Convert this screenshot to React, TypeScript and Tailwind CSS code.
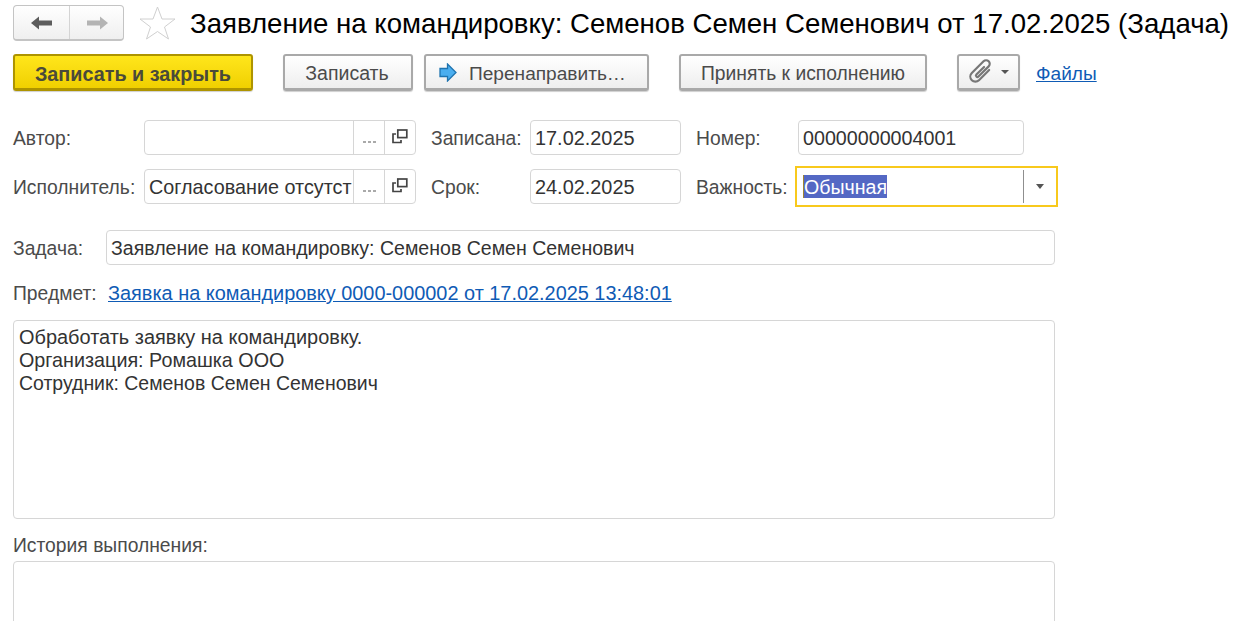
const font = { fontFamily: '"Liberation Sans", Arial, sans-serif' };

function Btn({ children, w, ml, cls }: { children: React.ReactNode; w: string; ml?: string; cls?: string }) {
  return (
    <button className={`${w} ${ml ?? ""} ${cls ?? "justify-center"} h-[37px] shrink-0 flex items-center rounded-[3px] border-2 border-[#a9a9a9] border-b-[3px] shadow-[0_1px_1px_#cfcfcf] bg-gradient-to-b from-white to-[#eeeeee] text-[#4b4b4b] text-[19.3px]`}>
      {children}
    </button>
  );
}

function OpenIcon() {
  return (
    <svg width="16" height="15" viewBox="0 0 16 15" fill="none" stroke="#444" strokeWidth="1.7">
      <rect x="5.8" y="1" width="9" height="7.6" fill="none" />
      <path d="M4 5H1v8.5h8V11" />
    </svg>
  );
}

function ChoiceField({ text, w }: { text: string; w: string }) {
  return (
    <div className={`${w} h-[35px] shrink-0 flex rounded-[4px] border border-[#d6d6d6] bg-white`}>
      <div className="flex-1 min-w-0 overflow-hidden whitespace-nowrap pl-[4px] leading-[34px] text-[19.8px] text-[#333]">{text}</div>
      <div className="w-[31px] border-l border-[#d6d6d6] flex items-center justify-center pt-[9px]">
        <div className="flex gap-[2px]">
          <span className="w-[3px] h-[2px] bg-[#aaa]" />
          <span className="w-[3px] h-[2px] bg-[#aaa]" />
          <span className="w-[3px] h-[2px] bg-[#aaa]" />
        </div>
      </div>
      <div className="w-[31px] border-l border-[#d6d6d6] flex items-center justify-center pb-[2px]">
        <OpenIcon />
      </div>
    </div>
  );
}

function TextField({ text, w, size }: { text: string; w: string; size: string }) {
  return (
    <div className={`${w} ${size} h-[35px] shrink-0 rounded-[4px] border border-[#d6d6d6] bg-white pl-[4px] leading-[34px] text-[#333] whitespace-nowrap overflow-hidden`}>
      {text}
    </div>
  );
}

export default function App() {
  return (
    <div style={font} className="w-[1247px] h-[621px] overflow-hidden bg-white text-[19.3px] text-[#4b4b4b] pl-[13px]">
      {/* Title row */}
      <div className="flex items-center pt-[5px] h-[41px]">
        <div className="w-[111px] h-[36px] flex rounded-[4px] border border-[#c4c4c4] border-b-2 bg-gradient-to-b from-white to-[#efefef]">
          <div className="w-[56px] flex items-center justify-center border-r border-[#d4d4d4]">
            <svg width="22" height="14" viewBox="0 0 22 14"><path d="M0 7 L8 0.5 V4.5 H21 V9.5 H8 V13.5 Z" fill="#5c5c5c" /></svg>
          </div>
          <div className="flex-1 flex items-center justify-center">
            <svg width="22" height="14" viewBox="0 0 22 14"><path d="M22 7 L14 0.5 V4.5 H1 V9.5 H14 V13.5 Z" fill="#b4b4b4" /></svg>
          </div>
        </div>
        <svg className="ml-[15px]" width="37" height="34" viewBox="0 0 37 34" fill="#fff" stroke="#d0d0d0" strokeWidth="1">
          <path d="M18.5 1 L23 13 H36 L25.5 21 L29.5 33 L18.5 25.5 L7.5 33 L11.5 21 L1 13 H14 Z" />
        </svg>
        <div className="ml-[14px] pt-[2px] text-[27.6px] text-black whitespace-nowrap">Заявление на командировку: Семенов Семен Семенович от 17.02.2025 (Задача)</div>
      </div>

      {/* Toolbar */}
      <div className="flex items-start mt-[13px] h-[38px]">
        <button className="w-[240px] h-[37px] shrink-0 pt-[4px] rounded-[3px] border-2 border-[#ae9400] border-b-[3px] shadow-[0_1px_1px_#cfcfcf] bg-gradient-to-b from-[#ffe61a] to-[#f0d000] font-bold text-[#4a4a3a] text-[19.8px]">Записать и закрыть</button>
        <Btn w="w-[130px]" ml="ml-[30px]"><span className="pt-[4px] pr-[2px] text-[19.5px]">Записать</span></Btn>
        <Btn w="w-[225px]" ml="ml-[11px]" cls="justify-start pl-[13px]">
          <svg className="mr-[12px]" width="18" height="19" viewBox="0 0 18 19">
            <path d="M1 5.5 H8.5 V1 L17 9.5 L8.5 18 V13.5 H1 Z" fill="#4baeef" stroke="#1f74b0" strokeWidth="1.3" />
          </svg>
          <span className="pt-[4px] text-[19.1px]">Перенаправить…</span>
        </Btn>
        <Btn w="w-[248px]" ml="ml-[30px]"><span className="pt-[4px]">Принять к исполнению</span></Btn>
        <Btn w="w-[63px]" ml="ml-[30px]">
          <svg className="mr-[7px] shrink-0" width="26" height="26" viewBox="3 3 18 18" fill="none" stroke="#777" strokeWidth="1.5" strokeLinecap="round" strokeLinejoin="round">
            <g transform="rotate(45 12 12)">
              <path d="M15 7 V17 a3.5 3.5 0 0 1 -7 0 V5.5 a2.5 2.5 0 0 1 5 0 V15.5 a1 1 0 0 1 -2 0 V8" />
            </g>
          </svg>
          <span className="w-0 h-0 border-x-[4px] border-x-transparent border-t-[4px] border-t-[#555]" />
        </Btn>
        <a className="ml-[16px] mt-[8px] text-[#0f5bb5] underline text-[19.1px] leading-[24px]">Файлы</a>
      </div>

      {/* Row 1 */}
      <div className="flex items-center mt-[28px] h-[35px]">
        <div className="w-[131px] shrink-0 pt-[3px]">Автор:</div>
        <ChoiceField text="" w="w-[272px]" />
        <div className="ml-[15px] w-[99px] shrink-0 pt-[3px]">Записана:</div>
        <TextField text="17.02.2025" w="w-[151px]" size="text-[19.9px]" />
        <div className="ml-[15px] w-[102px] shrink-0 pt-[3px]">Номер:</div>
        <TextField text="00000000004001" w="w-[226px]" size="text-[19.7px]" />
      </div>

      {/* Row 2 */}
      <div className="flex items-center mt-[11px] h-[41px]">
        <div className="w-[131px] shrink-0 pt-[3px]">Исполнитель:</div>
        <ChoiceField text="Согласование отсутст" w="w-[272px]" />
        <div className="ml-[15px] w-[99px] shrink-0 pt-[3px]">Срок:</div>
        <TextField text="24.02.2025" w="w-[151px]" size="text-[19.9px]" />
        <div className="ml-[15px] w-[99px] shrink-0 pt-[3px]">Важность:</div>
        <div className="w-[263px] h-[41px] shrink-0 flex items-center border-2 border-[#f8c91c] bg-white">
          <div className="flex-1 pl-[6px] flex">
            <span className="bg-[#5468c4] text-white text-[19.6px] h-[23px] leading-[25px] border-l border-[#a08530]">Обычная</span>
          </div>
          <div className="w-[33px] h-[33px] border-l border-[#8f8f8f] flex items-center justify-center">
            <span className="w-0 h-0 border-x-[4px] border-x-transparent border-t-[5px] border-t-[#555]" />
          </div>
        </div>
      </div>

      {/* Задача */}
      <div className="flex items-center mt-[23px] h-[35px]">
        <div className="w-[93px] shrink-0 pt-[3px]">Задача:</div>
        <TextField text="Заявление на командировку: Семенов Семен Семенович" w="w-[949px]" size="text-[19.55px]" />
      </div>

      {/* Предмет */}
      <div className="flex items-center mt-[17px] h-[24px]">
        <div className="w-[95px] shrink-0">Предмет:</div>
        <a className="text-[#0f5bb5] underline text-[19.9px]">Заявка на командировку 0000-000002 от 17.02.2025 13:48:01</a>
      </div>

      {/* Description */}
      <div className="mt-[14px] w-[1042px] h-[199px] rounded-[4px] border border-[#d6d6d6] pl-[5px] pt-[5px] leading-[23px] text-[#333]">
        <div className="text-[19.95px]">Обработать заявку на командировку.</div>
        <div className="text-[19.75px]">Организация: Ромашка ООО</div>
        <div className="text-[19.47px]">Сотрудник: Семенов Семен Семенович</div>
      </div>

      {/* История */}
      <div className="mt-[15px] h-[27px] leading-[24px]">История выполнения:</div>
      <div className="w-[1042px] h-[100px] rounded-[4px] border border-[#d6d6d6]" />
    </div>
  );
}
